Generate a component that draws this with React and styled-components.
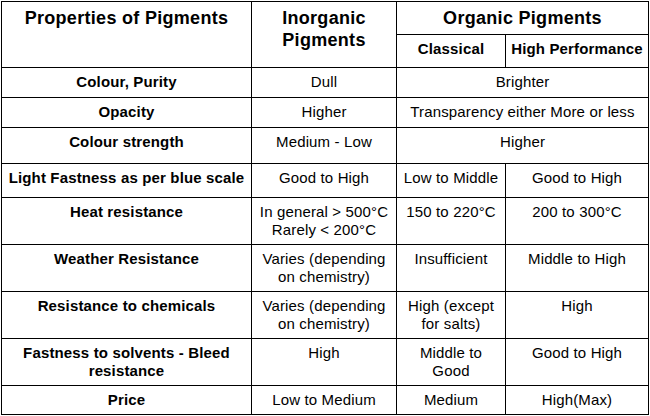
import React from "react";
import styled, { createGlobalStyle } from "styled-components";

const Global = createGlobalStyle`
  html, body { margin: 0; padding: 0; background: #fff; }
  body { font-family: "Liberation Sans", Arial, sans-serif; color: #000; }
`;

const Grid = styled.div`
  display: grid;
  grid-template-columns: 249px 144px 108px 142px;
  grid-template-rows: 32px 32px 29px 29px 35px 33px 46px 46px 46px 46px 28px;
  gap: 1px;
  padding: 1px;
  background: #000;
  width: max-content;
  margin: 1px 0 0 1px;
`;

const Cell = styled.div`
  background: #fff;
  text-align: center;
  padding: 5px 2px;
  font-size: ${(p) => (p.$big ? "18px" : "15px")};
  letter-spacing: ${(p) => (p.$big ? "0.3px" : "0.15px")};
  line-height: ${(p) => (p.$big ? "22px" : "18px")};
  font-weight: ${(p) => (p.$bold ? 700 : 400)};
  grid-column: ${(p) => p.$col || "auto"};
  grid-row: ${(p) => p.$row || "auto"};
  white-space: nowrap;
  overflow: hidden;
`;

const rows = [
  { label: "Colour, Purity", inorg: "Dull", span: "Brighter" },
  { label: "Opacity", inorg: "Higher", span: "Transparency either More or less" },
  { label: "Colour strength", inorg: "Medium - Low", span: "Higher" },
  { label: "Light Fastness as per blue scale", inorg: "Good to High", a: "Low to Middle", b: "Good to High" },
  { label: "Heat resistance", inorg: ["In general > 500°C", "Rarely < 200°C"], a: "150 to 220°C", b: "200 to 300°C" },
  { label: "Weather Resistance", inorg: ["Varies (depending", "on chemistry)"], a: "Insufficient", b: "Middle to High" },
  { label: "Resistance to chemicals", inorg: ["Varies (depending", "on chemistry)"], a: ["High (except", "for salts)"], b: "High" },
  { label: ["Fastness to solvents - Bleed", "resistance"], inorg: "High", a: ["Middle to", "Good"], b: "Good to High" },
  { label: "Price", inorg: "Low to Medium", a: "Medium", b: "High(Max)" },
];

const Lines = ({ v }) =>
  Array.isArray(v)
    ? v.map((t, i) => (
        <React.Fragment key={i}>
          {i > 0 && <br />}
          {t}
        </React.Fragment>
      ))
    : v;

export default function App() {
  return (
    <>
      <Global />
      <Grid>
        <Cell $bold $big $row="1 / 3" $col="1">Properties of Pigments</Cell>
        <Cell $bold $big $row="1 / 3" $col="2">
          Inorganic
          <br />
          Pigments
        </Cell>
        <Cell $bold $big $row="1" $col="3 / 5">Organic Pigments</Cell>
        <Cell $bold $row="2" $col="3">Classical</Cell>
        <Cell $bold $row="2" $col="4">High Performance</Cell>
        {rows.map((r, i) => (
          <React.Fragment key={i}>
            <Cell $bold>
              <Lines v={r.label} />
            </Cell>
            <Cell>
              <Lines v={r.inorg} />
            </Cell>
            {r.span ? (
              <Cell $col="3 / 5">{r.span}</Cell>
            ) : (
              <>
                <Cell>
                  <Lines v={r.a} />
                </Cell>
                <Cell>
                  <Lines v={r.b} />
                </Cell>
              </>
            )}
          </React.Fragment>
        ))}
      </Grid>
    </>
  );
}
